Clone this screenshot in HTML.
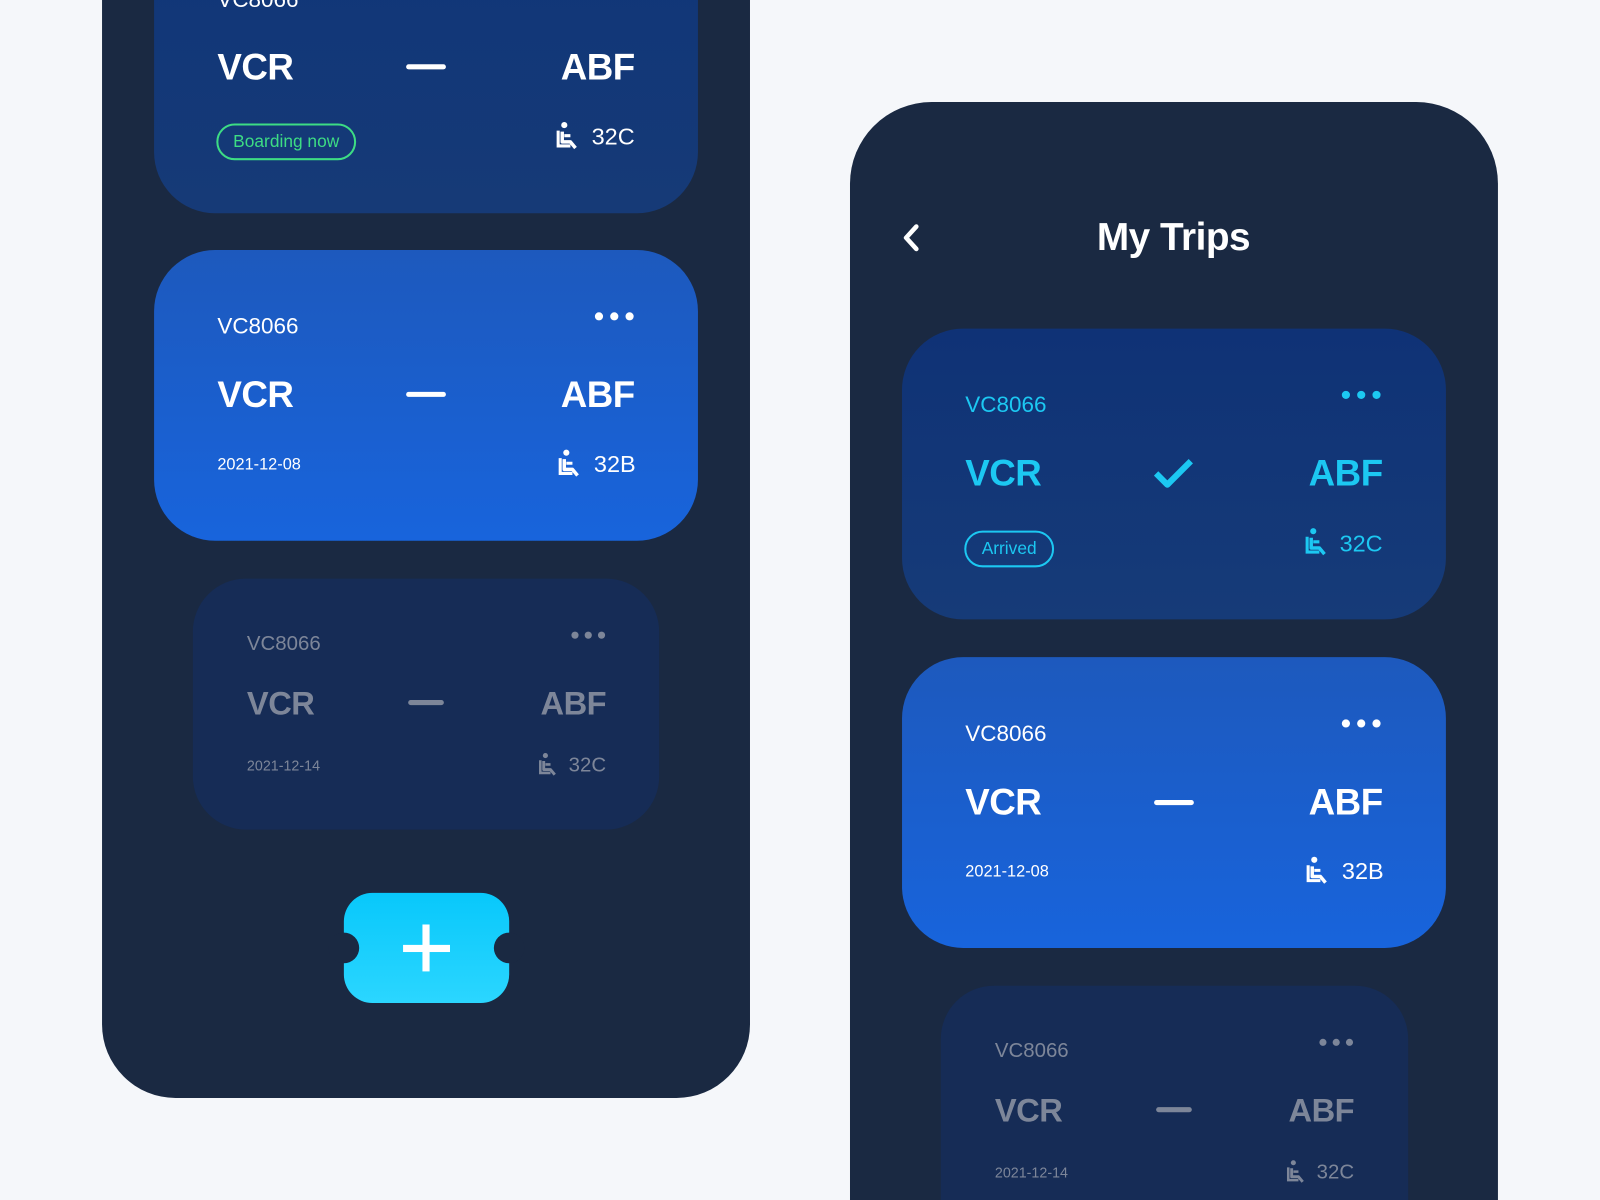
<!DOCTYPE html>
<html><head><meta charset="utf-8"><style>
html,body{margin:0;padding:0;width:1600px;height:1200px;overflow:hidden;background:#f5f7fa;font-family:"Liberation Sans",sans-serif}
#w{position:absolute;left:0;top:0;width:1568px;height:1176px;transform:scale(1.0204);transform-origin:0 0;overflow:hidden}
.a{position:absolute}
.phone{position:absolute;background:#1a2942}
.card{position:absolute;border-radius:60px;overflow:hidden}
.t{position:absolute;white-space:nowrap;line-height:1;transform:translateY(-50%)}
.r{transform:translate(-100%,-50%)}
.dash{position:absolute;height:5px;border-radius:3px}
.dots{position:absolute;display:flex;gap:7px}
.dots i{display:block;border-radius:50%}
.b{letter-spacing:-0.5px}
</style></head><body><div id="w">
<svg width="0" height="0" style="position:absolute"><defs>
<symbol id="seat" viewBox="0 0 24 30"><circle cx="9" cy="3.6" r="3" fill="currentColor"/><path d="M3 9v15h12" fill="none" stroke="currentColor" stroke-width="3"/><path d="M7 10v10h8l5 6" fill="none" stroke="currentColor" stroke-width="3.4" stroke-linejoin="round"/><path d="M9 14h6" stroke="currentColor" stroke-width="3"/></symbol>
</defs></svg>

<!-- LEFT PHONE -->
<div class="phone" style="left:100px;top:-80px;width:635px;height:1156px;border-radius:0 0 72px 72px"></div>

<div class="card" style="left:151px;top:-100px;width:533px;height:309px;background:linear-gradient(180deg,#0f3578,#163a77);"></div>
<div class="t" style="left:213px;top:0px;color:#fff;font-size:22px">VC8066</div>
<div class="t b" style="left:213px;top:66px;color:#fff;font-size:36px;font-weight:bold">VCR</div>
<div class="dash" style="left:398px;top:63px;width:39px;background:#fff"></div>
<div class="t r b" style="left:622px;top:66px;color:#fff;font-size:36px;font-weight:bold">ABF</div>
<div class="a" style="left:212px;top:121px;width:133px;height:32px;border:2px solid #3ddc84;border-radius:18px;color:#3ddc84;font-size:17px;line-height:32px;text-align:center">Boarding now</div>
<svg class="a" style="left:544px;top:119px;color:#fff" width="24" height="30"><use href="#seat"/></svg>
<div class="t r" style="left:622px;top:134px;color:#fff;font-size:23px">32C</div>

<div class="card" style="left:151px;top:245px;width:533px;height:285px;background:linear-gradient(180deg,#1d59bd,#1864dc)"></div>
<div class="t" style="left:213px;top:320px;color:#fff;font-size:22px">VC8066</div>
<div class="dots" style="left:583px;top:306px"><i style="width:8px;height:8px;background:#fff"></i><i style="width:8px;height:8px;background:#fff"></i><i style="width:8px;height:8px;background:#fff"></i></div>
<div class="t b" style="left:213px;top:387px;color:#fff;font-size:36px;font-weight:bold">VCR</div>
<div class="dash" style="left:398px;top:384px;width:39px;background:#fff"></div>
<div class="t r b" style="left:622px;top:387px;color:#fff;font-size:36px;font-weight:bold">ABF</div>
<div class="t" style="left:213px;top:456px;color:#fff;font-size:16px">2021-12-08</div>
<svg class="a" style="left:546px;top:440px;color:#fff" width="24" height="30"><use href="#seat"/></svg>
<div class="t r" style="left:623px;top:455px;color:#fff;font-size:23px">32B</div>

<div class="card" style="left:189px;top:567px;width:457px;height:246px;border-radius:52px;background:#162c56"></div>
<div class="t" style="left:242px;top:631px;color:#7d8699;font-size:20px">VC8066</div>
<div class="dots" style="left:560px;top:619px;gap:6px"><i style="width:7px;height:7px;background:#7d8699"></i><i style="width:7px;height:7px;background:#7d8699"></i><i style="width:7px;height:7px;background:#7d8699"></i></div>
<div class="t b" style="left:242px;top:689px;color:#7d8699;font-size:32px;font-weight:bold">VCR</div>
<div class="dash" style="left:400px;top:686px;width:35px;background:#7d8699"></div>
<div class="t r b" style="left:594px;top:689px;color:#7d8699;font-size:32px;font-weight:bold">ABF</div>
<div class="t" style="left:242px;top:750px;color:#7d8699;font-size:14px">2021-12-14</div>
<svg class="a" style="left:527px;top:737px;color:#7d8699" width="20" height="26"><use href="#seat"/></svg>
<div class="t r" style="left:594px;top:750px;color:#7d8699;font-size:20px">32C</div>

<div class="a" style="left:337px;top:875px;width:162px;height:108px;border-radius:28px;background:linear-gradient(180deg,#08c8fb,#2bd6ff)"></div>
<div class="a" style="left:322px;top:914px;width:30px;height:30px;border-radius:50%;background:#1a2942"></div>
<div class="a" style="left:484px;top:914px;width:30px;height:30px;border-radius:50%;background:#1a2942"></div>
<div class="a" style="left:395px;top:926px;width:46px;height:7px;background:#fff"></div>
<div class="a" style="left:414px;top:906px;width:7px;height:46px;background:#fff"></div>

<!-- RIGHT PHONE -->
<div class="phone" style="left:833px;top:100px;width:635px;height:1076px;border-radius:80px 80px 0 0"></div>
<svg class="a" style="left:880px;top:218px" width="24" height="32"><path d="M18 4 L8 15 L18 26" fill="none" stroke="#fff" stroke-width="4.5" stroke-linecap="round" stroke-linejoin="round"/></svg>
<div class="t b" style="left:1150px;top:233px;transform:translate(-50%,-50%);color:#fff;font-size:38px;font-weight:bold">My Trips</div>

<div class="card" style="left:884px;top:322px;width:533px;height:285px;background:linear-gradient(180deg,#0f3276,#163b78)"></div>
<div class="t" style="left:946px;top:397px;color:#1cc8f2;font-size:22px">VC8066</div>
<div class="dots" style="left:1315px;top:383px"><i style="width:8px;height:8px;background:#1cc8f2"></i><i style="width:8px;height:8px;background:#1cc8f2"></i><i style="width:8px;height:8px;background:#1cc8f2"></i></div>
<div class="t b" style="left:946px;top:464px;color:#1cc8f2;font-size:36px;font-weight:bold">VCR</div>
<svg class="a" style="left:1128px;top:447px" width="44" height="34"><path d="M5 17 L16 28 L39 5" fill="none" stroke="#1cc8f2" stroke-width="6" stroke-linejoin="round"/></svg>
<div class="t r b" style="left:1355px;top:464px;color:#1cc8f2;font-size:36px;font-weight:bold">ABF</div>
<div class="a" style="left:945px;top:520px;width:84px;height:32px;border:2px solid #1cc8f2;border-radius:18px;color:#1cc8f2;font-size:17px;line-height:32px;text-align:center">Arrived</div>
<svg class="a" style="left:1278px;top:517px;color:#1cc8f2" width="24" height="30"><use href="#seat"/></svg>
<div class="t r" style="left:1355px;top:533px;color:#1cc8f2;font-size:23px">32C</div>

<div class="card" style="left:884px;top:644px;width:533px;height:285px;background:linear-gradient(180deg,#1d59bd,#1864dc)"></div>
<div class="t" style="left:946px;top:719px;color:#fff;font-size:22px">VC8066</div>
<div class="dots" style="left:1315px;top:705px"><i style="width:8px;height:8px;background:#fff"></i><i style="width:8px;height:8px;background:#fff"></i><i style="width:8px;height:8px;background:#fff"></i></div>
<div class="t b" style="left:946px;top:786px;color:#fff;font-size:36px;font-weight:bold">VCR</div>
<div class="dash" style="left:1131px;top:784px;width:39px;background:#fff"></div>
<div class="t r b" style="left:1355px;top:786px;color:#fff;font-size:36px;font-weight:bold">ABF</div>
<div class="t" style="left:946px;top:855px;color:#fff;font-size:16px">2021-12-08</div>
<svg class="a" style="left:1279px;top:839px;color:#fff" width="24" height="30"><use href="#seat"/></svg>
<div class="t r" style="left:1356px;top:854px;color:#fff;font-size:23px">32B</div>

<div class="a" style="left:922px;top:966px;width:458px;height:210px;border-radius:52px 52px 0 0;background:#162c56"></div>
<div class="t" style="left:975px;top:1030px;color:#7d8699;font-size:20px">VC8066</div>
<div class="dots" style="left:1293px;top:1018px;gap:6px"><i style="width:7px;height:7px;background:#7d8699"></i><i style="width:7px;height:7px;background:#7d8699"></i><i style="width:7px;height:7px;background:#7d8699"></i></div>
<div class="t b" style="left:975px;top:1088px;color:#7d8699;font-size:32px;font-weight:bold">VCR</div>
<div class="dash" style="left:1133px;top:1085px;width:35px;background:#7d8699"></div>
<div class="t r b" style="left:1327px;top:1088px;color:#7d8699;font-size:32px;font-weight:bold">ABF</div>
<div class="t" style="left:975px;top:1149px;color:#7d8699;font-size:14px">2021-12-14</div>
<svg class="a" style="left:1260px;top:1136px;color:#7d8699" width="20" height="26"><use href="#seat"/></svg>
<div class="t r" style="left:1327px;top:1149px;color:#7d8699;font-size:20px">32C</div>
</div></body></html>
